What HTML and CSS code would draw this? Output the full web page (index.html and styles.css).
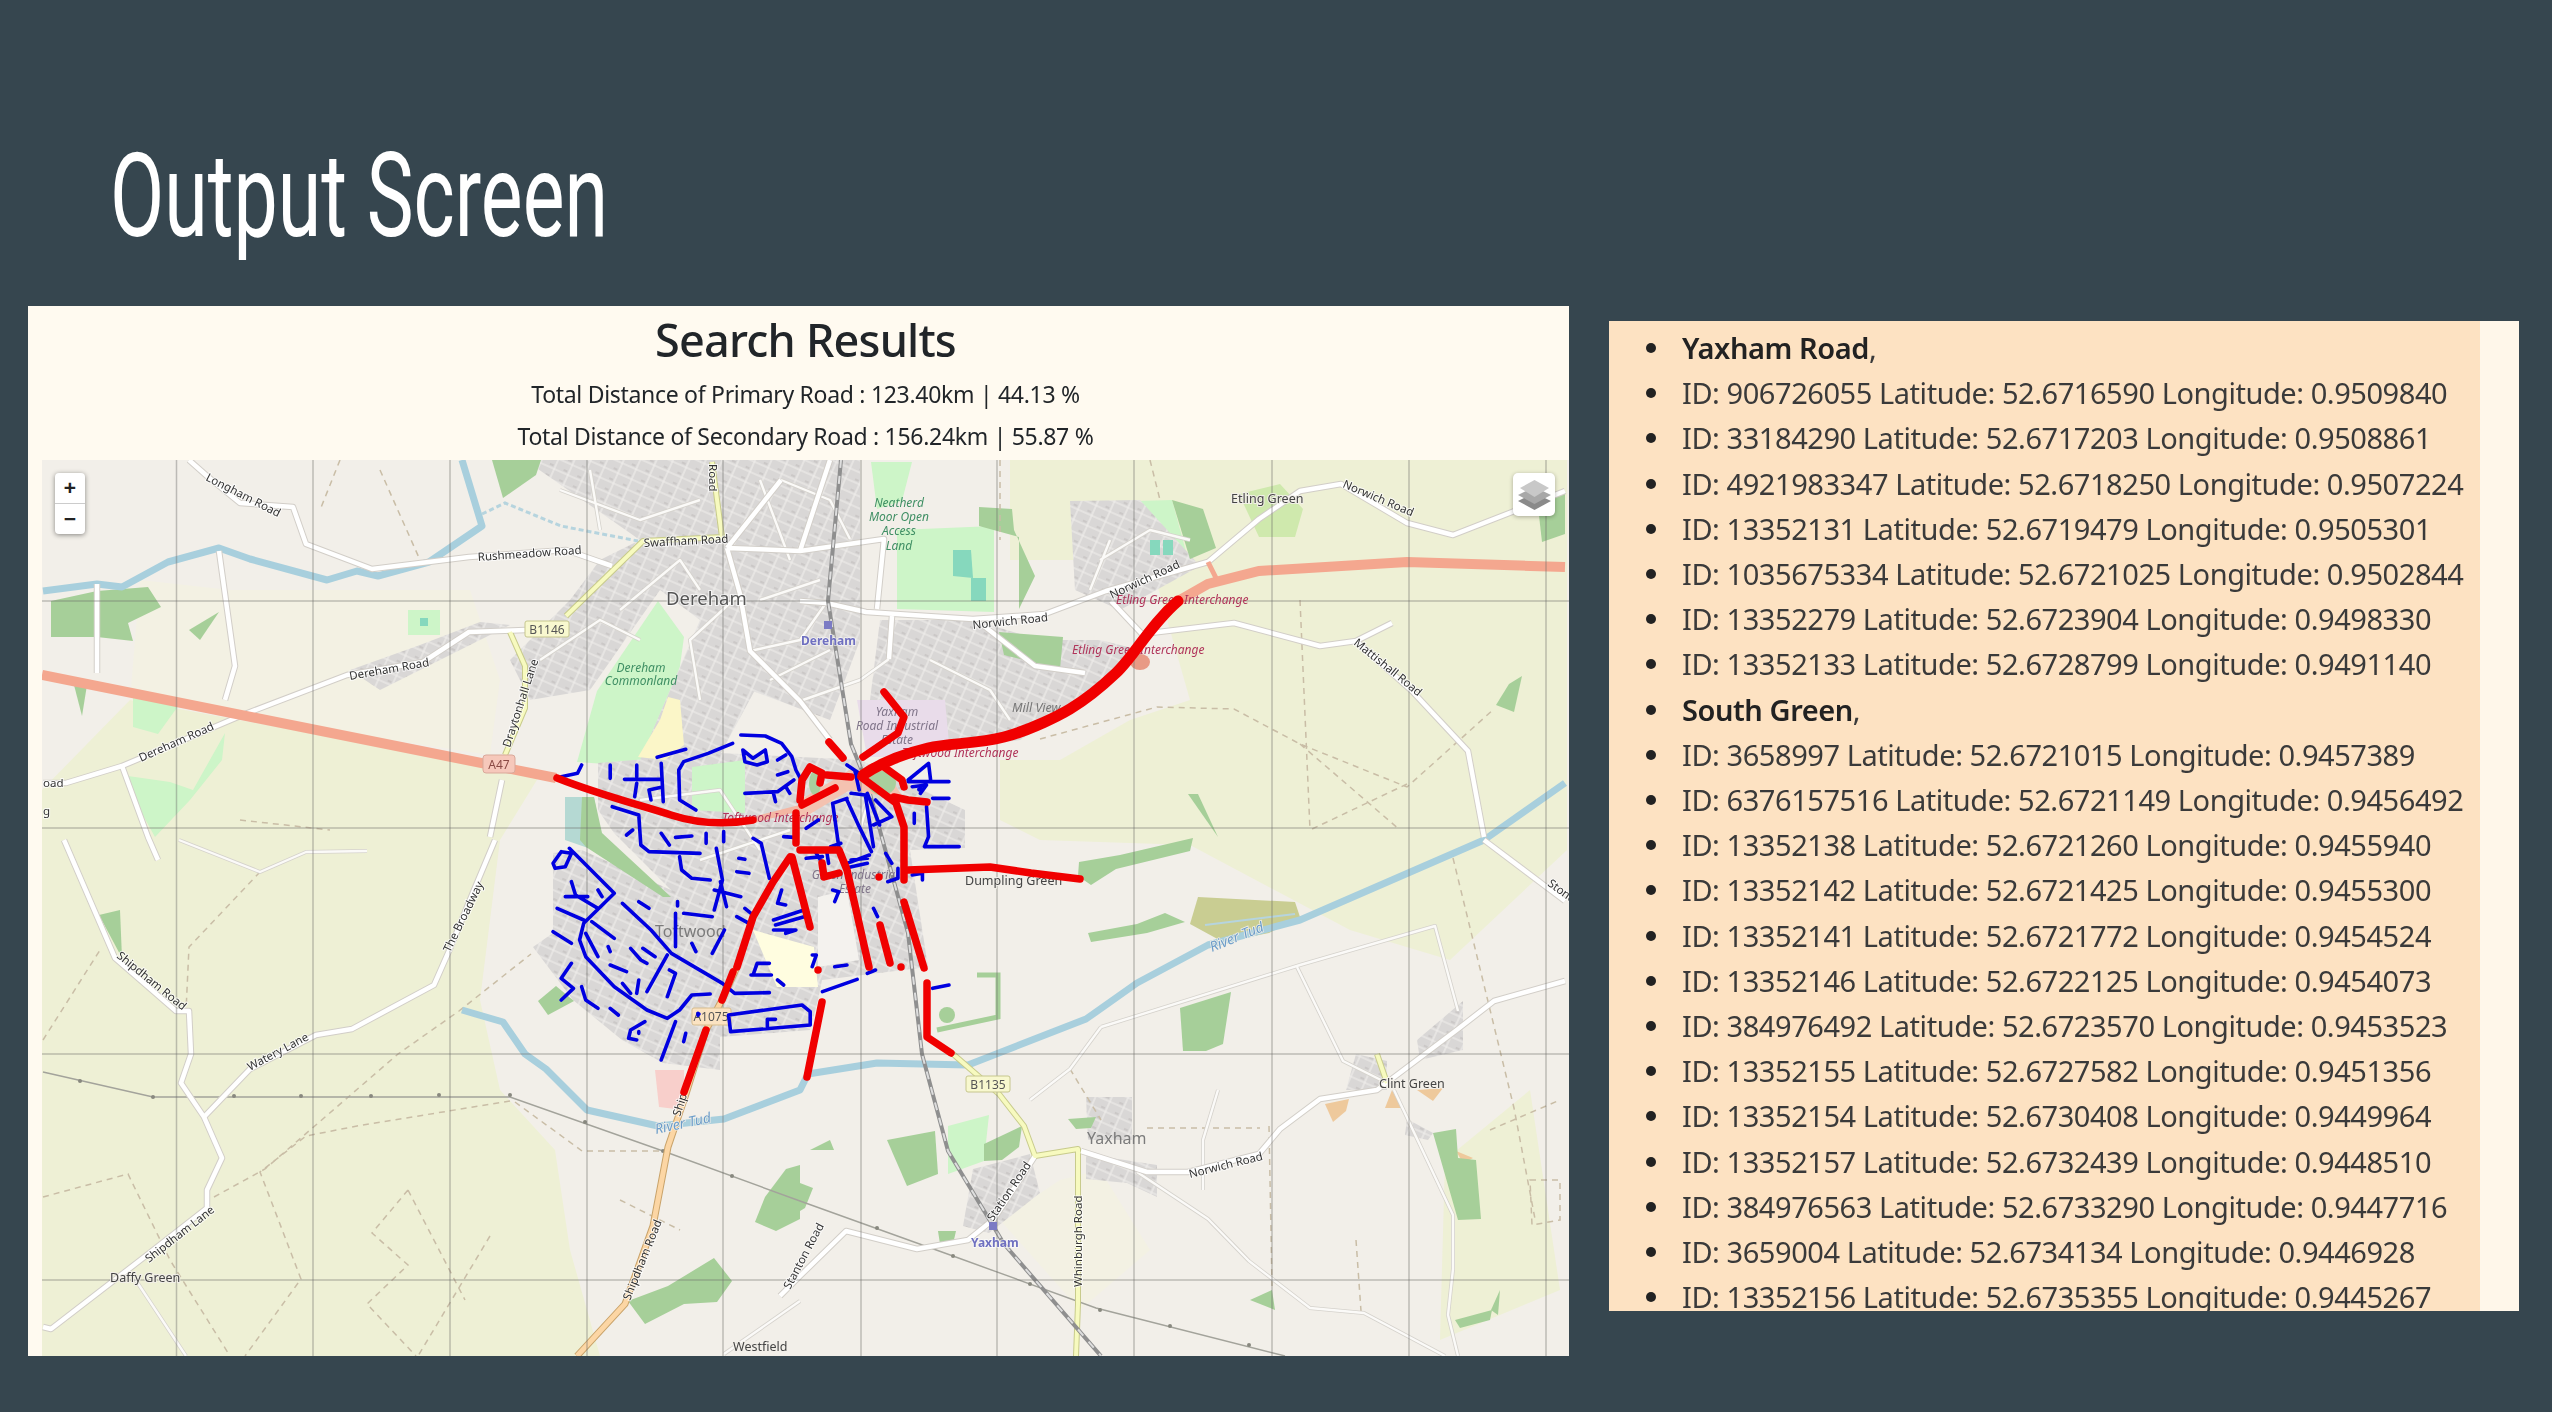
FILE: index.html
```html
<!DOCTYPE html>
<html lang="en">
<head>
<meta charset="utf-8">
<title>Output Screen</title>
<link rel="stylesheet" href="styles.css">
</head>
<body>
<h1 class="title">Output Screen</h1>
<main class="content">
<section class="results">
  <header class="results-head">
    <h2>Search Results</h2>
    <p>Total Distance of Primary Road : 123.40km | 44.13 %</p>
    <p>Total Distance of Secondary Road : 156.24km | 55.87 %</p>
  </header>
  <div class="map">
    <svg class="map-svg" viewBox="42 460 1527 896" width="1527" height="896">
      <defs>
        <pattern id="houses" width="15" height="11" patternUnits="userSpaceOnUse" patternTransform="rotate(24)">
          <rect width="15" height="11" fill="#d9d7d6"/>
          <path d="M0 5H15M7 0V11" stroke="#f1efec" stroke-width="1.100"/>
          <rect x="1" y="1" width="4" height="2" fill="#cbc8c7"/>
        </pattern>
        <g id="roads">
          <path d="M189 460L207 476 240 503 293 507 306 544 372 569 469 557 566 550 612 566"/>
          <path d="M43 783L66 783 122 766 245 714 347 675 423 662 469 632 525 630"/>
          <path d="M97 584V673M219 551L235 666 225 700M122 766L148 837 158 860M490 837L502 780"/>
          <path d="M64 840L115 958 176 1011H189L191 1054 181 1083 204 1117 222 1158 207 1190V1208L143 1258 51 1329 43 1327"/>
          <path d="M204 1117L250 1069 316 1035 352 1029 434 985 449 951 474 890 495 840"/>
          <path d="M1081 1151L1147 1172H1188L1259 1154 1280 1129 1320 1099 1377 1090 1458 1029 1494 1001 1565 981"/>
          <path d="M1035 1156L994 1219 968 1240 917 1249 846 1231 800 1276 780 1296"/>
          <path d="M1484 840L1565 901"/>
          <path d="M727 548L781 480M727 548L800 551 884 539 877 609M727 548L740 594 750 651 800 701 830 740"/>
          <path d="M800 601L826 603 866 612 973 619 1045 614 1106 591 1208 562 1259 519 1300 491 1341 484 1407 523 1453 535 1512 512 1565 491"/>
          <path d="M1111 601L1142 634 1234 623 1320 646 1356 641 1392 623"/>
          <path d="M1356 641L1412 691 1468 751 1484 837"/>
          <path d="M892 616L889 659M984 626L1035 666 1085 673M830 460L800 551"/>
        </g>
        <g id="minor-roads">
          <path d="M135 1279L186 1356M179 840L260 872 306 852 367 851"/>
          <path d="M800 1301L724 1354"/>
          <path d="M1394 1090L1453 1215V1269L1448 1315 1458 1356"/>
          <path d="M1137 1172L1208 1219 1249 1261 1310 1308 1364 1313 1445 1356"/>
          <path d="M1101 1027L1300 965 1435 926 1458 1011"/>
          <path d="M1297 967L1343 1061 1387 1083"/>
          <path d="M1218 1090L1203 1140V1190"/>
          <path d="M1101 1027L1070 1069 1030 1100"/>
          <path d="M781 480L830 500 850 539M750 651L800 640 826 603M800 701L860 680 889 659M740 594L690 640 700 700"/>
          <path d="M620 610L680 560 700 590M540 660L600 620 640 640M560 490L640 520 700 500M590 470L600 530"/>
          <path d="M930 660L990 690 1010 720M1100 560L1150 530 1190 540M1090 590L1110 540"/>
          <path d="M760 480L790 560M760 600L820 580M770 680L830 650"/>
          <path d="M640 800L720 790 760 850M700 860L790 830M860 830L880 760"/>
        </g>
        <g id="yellow-roads">
          <path d="M566 616L643 541 722 537 712 462"/>
          <path d="M510 632L525 666V708L505 755"/>
          <path d="M953 1054L999 1094 1024 1126 1035 1156 1078 1149V1304L1076 1356"/>
          <path d="M1377 1054L1387 1083"/>
        </g>
      </defs>

      <rect class="land-base" x="42" y="460" width="1527" height="896"/>
      <g class="farmland">
        <path d="M42 790L130 700 540 775 500 840 480 1000 500 1090 555 1150 570 1250 600 1356H42Z"/>
        <path d="M130 700L140 580 230 590 470 590 500 680 490 755Z" class="pale"/>
        <path d="M1010 460H1567V850L1450 960 1350 930 1190 845 1040 840 1000 820V760L1060 760 1130 720 1190 700 1150 560 1010 560Z"/>
        <path d="M1060 1180L1100 1170 1150 1250 1080 1310 1000 1220Z" class="pale"/>
        <path d="M1445 1160L1530 1090 1560 1290 1440 1340Z"/>
      </g>
      <g class="lightgreen">
        <path d="M577 762L597 691 658 601 684 637 679 673 663 744 633 766Z"/>
        <path d="M871 462H912L902 501 877 509Z"/>
        <path d="M897 530L994 526V612L897 609Z"/>
        <path d="M1137 501L1172 500 1188 559 1157 562 1137 530Z"/>
        <path d="M951 648H981V687L951 680Z"/>
        <path d="M948 1126L989 1115 984 1161 948 1174Z"/>
        <path d="M128 776L170 782 193 790 225 733 222 760 190 800 155 837 140 810Z"/>
        <path d="M133 698L179 705 158 734 133 727Z"/>
        <path d="M408 610H440V635H408Z"/>
      </g>
      <g class="urban">
        <path d="M525 460H700L735 590 755 690 720 755 640 760 700 620 660 590 590 690 530 700 510 660 570 600 600 560 640 540Z"/>
        <path d="M700 460H860V640L830 720 750 690 735 590Z"/>
        <path d="M1070 501L1140 500 1200 566 1120 610 1075 590Z"/>
        <path d="M880 620L973 620 1040 640 1100 640 1140 650 1100 690 1020 740 940 750 870 700Z"/>
        <path d="M598 763L720 753 860 760 965 810 965 848 910 850 928 967 822 980 818 1000 810 1030 720 1037 720 1070 663 1063 622 1040 573 1000 533 947 553 933 553 853 582 850 671 890 614 833 598 810Z"/>
        <path d="M1086 1097H1132V1140H1088Z"/>
        <path d="M1086 1154L1157 1165V1197L1127 1183 1086 1179Z"/>
        <path d="M973 1169L1030 1154 1040 1193 989 1233 963 1226Z"/>
        <path d="M1356 1054L1387 1061V1090L1346 1090Z"/>
        <path d="M1407 1119L1433 1133 1428 1140 1405 1135Z"/>
        <path d="M1417 1040L1463 1001V1050L1420 1060Z"/>
        <path d="M350 670L420 645 480 622 510 625 450 655 380 690Z"/>
      </g>
      <g class="special">
        <path class="purple" d="M857 700H945L949 743 904 757 867 757Z"/>
        <path class="school" d="M753 930L814 947 818 987 777 987Z"/>
        <path class="retail" d="M818 897L847 890 859 960 818 967Z"/>
        <path class="sand" d="M638 757L660 720 668 697 680 700 684 745 665 760Z"/>
        <path class="pink" d="M655 1070H684V1110L659 1107Z"/>
        <path class="lightgreen-fill" d="M692 767L745 760V813L692 810Z"/>
        <path class="orange" d="M1325 1104L1349 1099 1346 1111 1333 1122Z"/>
        <path class="orange" d="M1392 1090L1402 1108 1385 1108Z"/>
        <path class="orange" d="M1417 1090L1443 1088 1433 1101Z"/>
        <path class="orange" d="M1456 1151L1473 1158 1463 1163Z"/>
        <path class="olive" d="M1198 897L1295 902 1300 917 1269 933 1223 942 1190 924Z"/>
        <path class="reservoir" d="M565 797H594L600 830 588 848 565 840Z"/>
      </g>
      <g class="wood">
        <path d="M51 601L97 591 148 587 161 607 128 623 133 641 97 637 51 637Z"/>
        <path d="M492 460H541L536 475 503 498Z"/>
        <path d="M189 630L219 612 200 640Z"/>
        <path d="M74 685H87L82 716Z"/>
        <path d="M979 507L1012 509 1014 530 1035 576 1019 609V537L979 526Z"/>
        <path d="M1172 500L1203 509 1216 548 1190 559Z"/>
        <path d="M1537 498L1565 494V534L1542 542Z"/>
        <path d="M1509 684L1522 676 1514 712 1496 705Z"/>
        <path d="M1188 794H1198L1218 837Z"/>
        <path d="M999 632L1063 637 1060 669 1004 655Z"/>
        <path d="M1079 862L1120 855 1193 838 1190 851 1116 869 1091 885 1078 876Z"/>
        <path d="M1088 933L1137 924 1165 913 1185 922 1147 933 1091 942Z"/>
        <path d="M1180 1008L1231 992 1223 1044 1206 1051H1183Z"/>
        <path d="M887 1140L935 1131 938 1174 907 1186Z"/>
        <path d="M984 1144L1022 1126 1019 1147 1002 1160 984 1161Z"/>
        <path d="M1068 1119L1096 1117 1091 1128 1076 1129Z"/>
        <path d="M800 1183L813 1188 805 1208 800 1211Z"/>
        <path d="M1433 1133L1456 1129 1458 1158 1476 1160 1481 1219 1458 1220Z"/>
        <path d="M938 1231H956L953 1244 940 1244Z"/>
        <path d="M628 1301L668 1286 714 1258 732 1281 717 1302 684 1304 645 1324Z"/>
        <path d="M755 1222L765 1197 786 1169 800 1165V1219L776 1231Z"/>
        <path d="M99 915L120 910 122 958Z"/>
        <path d="M538 1001L556 986 574 1001 548 1015Z"/>
        <path d="M582 797H594L602 833 671 897H663L586 847 580 840Z"/>
        <path d="M810 1150H834L830 1140Z"/>
        <path d="M1239 494L1280 484 1303 509 1295 537 1259 537Z" class="meadow"/>
        <path d="M1250 1300L1272 1290 1275 1310Z"/>
        <path d="M1455 1320L1492 1310 1490 1320 1460 1328Z"/>
        <path d="M1491 1310L1500 1290 1498 1315Z"/>
      </g>
      <g class="pitches">
        <path d="M953 550H971L973 578 953 576Z"/>
        <path d="M971 578H986V601H971Z"/>
        <path d="M1150 540H1160V555H1150ZM1163 540H1173V555H1163Z"/>
        <path d="M420 618H428V626H420Z"/>
      </g>
      <path class="park-wall" d="M977 975H998V1017L937 1030"/>
      <circle class="park-pond" cx="947" cy="1015" r="8"/>
      <g class="tracks">
        <path d="M260 872L189 947 186 1011M43 1040L100 950M214 1197L265 1169 398 1054 459 1011 531 954"/>
        <path d="M510 1101L357 1126 306 1136 260 1172 301 1279 245 1356M43 1197L128 1174 170 1260 230 1356"/>
        <path d="M408 1190L372 1233 408 1265 367 1304 416 1356M490 1236L418 1356M408 1190L465 1300"/>
        <path d="M515 1102L582 1151H663"/>
        <path d="M1040 739L1157 707 1234 709 1300 744 1407 787 1494 709M1407 784L1310 830M1300 744L1400 830"/>
        <path d="M1453 858L1514 1108 1535 1219M1269 1126L1272 1286M1070 1069L1101 1120M1356 1240L1361 1311"/>
        <path d="M1147 1128H1260M1490 1130L1560 1100M1530 1180H1560V1220L1532 1225Z"/>
        <path d="M340 460L320 510M380 470L420 560M240 820L330 830M620 1200L680 1230"/>
        <path d="M1000 460L1000 540M1150 460L1160 500M1300 600L1310 830"/>
      </g>
      <g class="water">
        <path d="M43 591L97 584 122 587 168 562 219 548 250 559 327 580 357 571 378 576 429 562 482 526 462 460"/>
        <path d="M462 1010L503 1022 525 1054 546 1069 587 1110 658 1126 724 1119 800 1090 808 1074 877 1063 968 1065 1086 1019 1137 983 1208 945 1300 920 1484 840 1565 783"/>
      </g>
      <path class="stream" d="M482 514L505 503 561 526 638 541"/>
      <path class="stream-thin" d="M1205 925L1295 914"/>
      <path class="powerline" d="M43 1072L153 1097H510L663 1151 800 1201 953 1256 1096 1308 1285 1356"/>
      <g class="pylons">
        <circle cx="80" cy="1081" r="2"/><circle cx="153" cy="1097" r="2"/><circle cx="234" cy="1096" r="2"/><circle cx="301" cy="1096" r="2"/><circle cx="371" cy="1096" r="2"/><circle cx="439" cy="1095" r="2"/><circle cx="510" cy="1095" r="2"/><circle cx="585" cy="1122" r="2"/><circle cx="663" cy="1151" r="2"/><circle cx="732" cy="1176" r="2"/><circle cx="877" cy="1228" r="2"/><circle cx="953" cy="1256" r="2"/><circle cx="1030" cy="1284" r="2"/><circle cx="1100" cy="1310" r="2"/><circle cx="1170" cy="1326" r="2"/><circle cx="1249" cy="1345" r="2"/>
      </g>
      <use href="#minor-roads" class="casing-minor"/>
      <use href="#minor-roads" class="road-minor"/>
      <use href="#roads" class="casing"/>
      <use href="#yellow-roads" class="casing-yellow"/>
      <use href="#roads" class="road"/>
      <use href="#yellow-roads" class="road-yellow"/>
      <path class="road-orange-case" d="M737 967L722 1000 706 1030 686 1094 668 1147 653 1226 625 1304 577 1356"/>
      <path class="road-orange" d="M737 967L722 1000 706 1030 686 1094 668 1147 653 1226 625 1304 577 1356"/>
      <path class="rail" d="M841 460L828 601 851 744 867 783 908 933 922 1054 948 1151 1004 1244 1101 1356"/>
      <path class="rail-dash" d="M841 460L828 601 851 744 867 783 908 933 922 1054 948 1151 1004 1244 1101 1356"/>
      <path class="trunk" d="M42 675L556 778"/>
      <path class="trunk-thin" d="M753 820L800 808 836 788"/>
      <path class="trunk" d="M1178 601L1208 584 1259 571 1407 562 1565 567"/>
      <path class="trunk-link" d="M1208 562L1216 578"/>
      <path class="junction" d="M800 800L850 770 885 770 905 800 850 790 800 820Z"/>
      <ellipse class="junction-green" cx="882" cy="783" rx="14" ry="12"/>
      <ellipse class="junction-green" cx="815" cy="783" rx="6" ry="12"/>
      <ellipse class="junction-orange" cx="1140" cy="662" rx="10" ry="8"/>
      <g class="grid">
        <path d="M176.500 460V1356M313 460V1356M450 460V1356M587 460V1356M723 460V1356M861 460V1356M997 460V1356M1134 460V1356M1272 460V1356M1409 460V1356M1546 460V1356"/>
        <path d="M42 601H1569M42 828H1569M42 1054H1569M42 1280H1569"/>
      </g>

      <g class="labels">
        <text x="205" y="480" transform="rotate(27 205 480)">Longham Road</text>
        <text x="478" y="561" transform="rotate(-4 478 561)">Rushmeadow Road</text>
        <text x="644" y="547" transform="rotate(-3 644 547)">Swaffham Road</text>
        <text x="709" y="464" transform="rotate(90 709 464)">Road</text>
        <text x="350" y="680" transform="rotate(-10 350 680)">Dereham Road</text>
        <text x="141" y="762" transform="rotate(-24 141 762)">Dereham Road</text>
        <text x="43" y="787">oad</text>
        <text x="43" y="815">g</text>
        <text x="510" y="748" transform="rotate(-72 510 748)">Draytonhall Lane</text>
        <text x="973" y="629" transform="rotate(-6 973 629)">Norwich Road</text>
        <text x="1112" y="599" transform="rotate(-25 1112 599)">Norwich Road</text>
        <text x="1342" y="487" transform="rotate(23 1342 487)">Norwich Road</text>
        <text x="1353" y="644" transform="rotate(39 1353 644)">Mattishall Road</text>
        <text x="1190" y="1178" transform="rotate(-14 1190 1178)">Norwich Road</text>
        <text x="993" y="1222" transform="rotate(-56 993 1222)">Station Road</text>
        <text x="1082" y="1287" transform="rotate(-90 1082 1287)">Whinburgh Road</text>
        <text x="790" y="1290" transform="rotate(-62 790 1290)">Stanton Road</text>
        <text x="1547" y="885" transform="rotate(36 1547 885)">Stone Road</text>
        <text x="116" y="957" transform="rotate(39 116 957)">Shipdham Road</text>
        <text x="250" y="1071" transform="rotate(-28 250 1071)">Watery Lane</text>
        <text x="450" y="953" transform="rotate(-64 450 953)">The Broadway</text>
        <text x="149" y="1263" transform="rotate(-38 149 1263)">Shipdham Lane</text>
        <text x="630" y="1301" transform="rotate(-68 630 1301)">Shipdham Road</text>
        <text x="680" y="1117" transform="rotate(-72 680 1117)">Ship</text>
      </g>
      <g class="hamlets">
        <text x="110" y="1282">Daffy Green</text>
        <text x="733" y="1351">Westfield</text>
        <text x="1231" y="503">Etling Green</text>
        <text x="1379" y="1088">Clint Green</text>
        <text x="965" y="885">Dumpling Green</text>
      </g>
      <text class="town" x="666" y="605">Dereham</text>
      <text class="village" x="1087" y="1144">Yaxham</text>
      <text class="village" x="655" y="937">Toftwood</text>
      <text class="mill" x="1012" y="712">Mill View</text>
      <g class="parks">
        <text x="641" y="672">Dereham</text>
        <text x="641" y="685">Commonland</text>
        <text x="899" y="507">Neatherd</text>
        <text x="899" y="521">Moor Open</text>
        <text x="899" y="535">Access</text>
        <text x="899" y="550">Land</text>
      </g>
      <g class="estate">
        <text x="897" y="716">Yaxham</text>
        <text x="897" y="730">Road Industrial</text>
        <text x="897" y="744">Estate</text>
        <text x="855" y="879">Green Industrial</text>
        <text x="855" y="893">Estate</text>
      </g>
      <g class="interchange">
        <text x="1116" y="604">Etling Green Interchange</text>
        <text x="1072" y="654">Etling Green Interchange</text>
        <text x="722" y="822">Toftwood Interchange</text>
        <text x="902" y="757">Toftwood Interchange</text>
      </g>
      <g class="rivers">
        <text x="656" y="1134" transform="rotate(-12 656 1134)">River Tud</text>
        <text x="1212" y="952" transform="rotate(-22 1212 952)">River Tud</text>
      </g>
      <rect class="station-mark" x="824" y="621" width="8" height="8"/>
      <rect class="station-mark" x="989" y="1222" width="8" height="8"/>
      <text class="station" x="801" y="645">Dereham</text>
      <text class="station" x="971" y="1247">Yaxham</text>
      <rect class="shield shield-b" x="525" y="621" width="44" height="16" rx="2"/>
      <text class="shield-text" x="547" y="634">B1146</text>
      <rect class="shield shield-a" x="483" y="755" width="32" height="18" rx="3"/>
      <text class="shield-text shield-text-a" x="499" y="769">A47</text>
      <rect class="shield shield-b" x="966" y="1076" width="44" height="16" rx="2"/>
      <text class="shield-text" x="988" y="1089">B1135</text>
      <rect class="shield shield-c" x="692" y="1008" width="39" height="17" rx="2"/>
      <text class="shield-text" x="711" y="1021">A1075</text>

      <g transform="translate(500 700) scale(.40816 .33333)">
        <path class="secondary" d="M590 105L650 108 690 130 715 170 725 210 740 245M570 130L510 160 450 185 438 210 440 300 480 330M385 172L455 148M595 150L620 175 650 150 655 185 630 195 600 185ZM680 180L700 165M680 225L705 215M600 280L680 275 720 240M670 280L675 305M700 260L710 280M150 230L190 220 200 195M270 195V235M335 195V230M305 238H395M395 190L400 305M335 250L330 290M365 270L370 300M395 262L365 270M275 320L340 345 345 435 365 455 490 460M310 405L325 390M395 400L415 435M430 412L470 408M505 400V430M548 395V425M620 415L640 430 660 535M530 445L545 540 525 630M440 470L445 510 470 535 515 540M170 445L280 580 205 670 195 720 210 770 280 860 360 930 410 955 440 930 470 885 515 882M150 455L175 460 160 500 135 505 130 490ZM300 610L370 690 420 760 545 850 575 880 660 878M410 765L360 875M175 545L185 585 240 625M160 590H215M140 625L205 660M240 570L250 590M225 665L280 715M210 700L240 770M265 740L270 755M130 695L175 730M175 790L150 835 180 865 150 900M200 860L210 900 240 925M320 745L345 780 360 790M350 745L380 770M270 795L310 815M300 850L320 880M340 840L335 880M415 810L430 820 410 890M270 925L290 945M355 965L320 990 315 1015 335 1020M430 965L395 1080M455 1000L450 1025M340 605L365 625M435 605V618M450 640L520 650M430 640V740M470 730L480 755M550 690L520 760M525 570L590 590M540 545L555 620M580 650L610 670M580 515L610 520M585 475L600 478M600 625L615 640M690 570L680 610 700 615M670 660L745 630M675 675L745 650M670 690L725 690 700 700M750 385L780 360M695 410L720 412M620 825L630 790H660M615 825H665M680 840L695 855M765 765H775L765 800M820 800L850 795M790 875L875 838M900 820L920 810M560 945L740 915 760 935V975L565 995ZM655 980V958H675M815 310L830 440M850 300L880 380 910 455M860 280L895 285 915 440M900 280L930 375M920 300L960 350 915 375M815 310L850 295M870 215L880 270M850 195L880 220M750 475L790 470M770 450L790 490M800 450L805 490M810 440L835 430M850 490L905 465M860 480L900 475M845 505L900 490M815 570L830 575 820 605M945 460L960 490M950 545L975 535V505M1010 525L1035 520V540M915 625L925 650M1000 240L1050 190 1055 240M1010 260L1045 255 1030 280M1000 245H1100M1060 295H1100M1015 340V370M1045 320L1050 410 1040 440H1125M1060 865L1100 855M1005 680V684M485 940V946M340 995V1000"/>
        <circle class="secondary-dot" cx="1030" cy="268" r="8"/>
        <circle class="secondary-dot" cx="487" cy="942" r="5"/>
      </g>
      <g class="primary">
        <path class="primary-wide" d="M1178 601C1150 625 1135 655 1116 673S1080 703 1070 709 1031 730 1004 737 949 743 928 748 882 762 863 775"/>
        <path d="M557 778C600 795 640 805 671 815S730 824 753 820"/>
        <path d="M802 805L835 788"/>
        <path d="M800 800L802 780 810 767 822 773 820 783"/>
        <path d="M827 775L851 777"/>
        <path d="M829 742L843 758"/>
        <path d="M884 692L904 717 898 733 863 757"/>
        <path d="M861 777L896 803 904 827V880"/>
        <path d="M884 767L902 780 904 787"/>
        <path d="M894 797L908 800 927 802"/>
        <path d="M908 870L990 867 1031 873 1080 879"/>
        <path d="M796 813V843"/>
        <path d="M790 857L773 882 753 917 737 967"/>
        <path d="M733 972L722 1000"/>
        <path d="M706 1030L684 1092"/>
        <path d="M792 857L810 927"/>
        <path d="M800 850H839L847 870 869 967"/>
        <path d="M880 925L890 963"/>
        <path d="M822 863L824 877 839 873"/>
        <path d="M904 902L924 968"/>
        <path d="M927 983V1037L951 1053"/>
        <path d="M822 1002L807 1077"/>
        <path d="M818 970V970.100M901 967V967.100M879 877V877.100"/>
      </g>
    </svg>
    <div class="zoom-control">
      <span class="zoom-btn">+</span>
      <span class="zoom-btn">−</span>
    </div>
    <div class="layers-control">
      <svg viewBox="0 0 33 30" width="33" height="30">
        <path class="layer-c" d="M16.500 13L33 21 16.500 30 0 21Z"/>
        <path class="layer-b" d="M16.500 7L33 15 16.500 24 0 15Z"/>
        <path class="layer-a" d="M16.500 0L31 8 16.500 17 2 8Z"/>
      </svg>
    </div>
  </div>
</section>
<section class="nodes">
  <ul class="node-list">
    <li><b>Yaxham Road</b>,</li>
    <li>ID: 906726055 Latitude: 52.6716590 Longitude: 0.9509840</li>
    <li>ID: 33184290 Latitude: 52.6717203 Longitude: 0.9508861</li>
    <li>ID: 4921983347 Latitude: 52.6718250 Longitude: 0.9507224</li>
    <li>ID: 13352131 Latitude: 52.6719479 Longitude: 0.9505301</li>
    <li>ID: 1035675334 Latitude: 52.6721025 Longitude: 0.9502844</li>
    <li>ID: 13352279 Latitude: 52.6723904 Longitude: 0.9498330</li>
    <li>ID: 13352133 Latitude: 52.6728799 Longitude: 0.9491140</li>
    <li><b>South Green</b>,</li>
    <li>ID: 3658997 Latitude: 52.6721015 Longitude: 0.9457389</li>
    <li>ID: 6376157516 Latitude: 52.6721149 Longitude: 0.9456492</li>
    <li>ID: 13352138 Latitude: 52.6721260 Longitude: 0.9455940</li>
    <li>ID: 13352142 Latitude: 52.6721425 Longitude: 0.9455300</li>
    <li>ID: 13352141 Latitude: 52.6721772 Longitude: 0.9454524</li>
    <li>ID: 13352146 Latitude: 52.6722125 Longitude: 0.9454073</li>
    <li>ID: 384976492 Latitude: 52.6723570 Longitude: 0.9453523</li>
    <li>ID: 13352155 Latitude: 52.6727582 Longitude: 0.9451356</li>
    <li>ID: 13352154 Latitude: 52.6730408 Longitude: 0.9449964</li>
    <li>ID: 13352157 Latitude: 52.6732439 Longitude: 0.9448510</li>
    <li>ID: 384976563 Latitude: 52.6733290 Longitude: 0.9447716</li>
    <li>ID: 3659004 Latitude: 52.6734134 Longitude: 0.9446928</li>
    <li>ID: 13352156 Latitude: 52.6735355 Longitude: 0.9445267</li>
  </ul>
</section>
</main>
</body>
</html>
```

FILE: styles.css
```css
html, body { margin: 0; padding: 0; }
body {
  width: 2552px;
  height: 1412px;
  overflow: hidden;
  background: #36464f;
  font-family: "Noto Sans", "Open Sans", sans-serif;
}
.title {
  margin: 0;
  height: 306px;
  padding: 126px 0 0 110px;
  box-sizing: border-box;
  color: #fff;
  font-family: Roboto, sans-serif;
  font-weight: 400;
  font-size: 116px;
  line-height: 140px;
  transform: scaleX(.68);
  transform-origin: 110px 0;
  white-space: nowrap;
}
.content { display: flex; align-items: flex-start; padding-left: 28px; }

.results {
  width: 1541px;
  height: 1050px;
  box-sizing: border-box;
  padding-left: 14px;
  display: flex;
  flex-direction: column;
  background: #fffaf0;
  flex: none;
}
.results-head {
  height: 154px;
  box-sizing: border-box;
  text-align: center;
  color: #212529;
  filter: blur(.5px);
}
.results-head h2 {
  margin: 0;
  padding-top: 6px;
  font-size: 45px;
  font-weight: 500;
  line-height: 56px;
  letter-spacing: -.8px;
}
.results-head p {
  margin: 0;
  font-size: 23px;
  line-height: 42px;
  letter-spacing: -.3px;
}
.results-head h2 + p { margin-top: 5px; }

.map { position: relative; height: 896px; overflow: hidden; }
.map-svg { display: block; filter: blur(.6px); }
.land-base { fill: #f2efe9; }
.farmland path { fill: #eef0d5; }
.farmland .pale { fill: #f3f1e3; }
.lightgreen path { fill: #cdf5c8; }
.urban path { fill: url(#houses); }
.purple { fill: #e9dcea; }
.school { fill: #fffde0; }
.retail { fill: #f4f2ee; }
.sand { fill: #fbf6c8; }
.pink { fill: #f8cfcb; }
.lightgreen-fill { fill: #cdf5c8; }
.orange { fill: #eec99c; }
.olive { fill: #c9cd92; }
.reservoir { fill: #b5d9d3; }
.wood path { fill: #a6cf99; }
.wood .meadow { fill: #cfe9ad; }
.pitches path { fill: #86d8bd; }
.park-wall { fill: none; stroke: #a6cf99; stroke-width: 5; }
.park-pond { fill: #a6cf99; }
.tracks path { fill: none; stroke: #c9bda6; stroke-width: 1.5; stroke-dasharray: 6 5; }
.water path { fill: none; stroke: #a8cfdd; stroke-width: 7; stroke-linejoin: round; }
.stream { fill: none; stroke: #b6d4de; stroke-width: 3; stroke-dasharray: 5 3; }
.stream-thin { fill: none; stroke: #b6d4de; stroke-width: 2; }
.powerline { fill: none; stroke: #a3a39b; stroke-width: 1.4; }
.pylons circle { fill: #88887f; }
.casing { fill: none; stroke: #d2cec8; stroke-width: 6.500; stroke-linejoin: round; }
.road { fill: none; stroke: #fff; stroke-width: 4.500; stroke-linejoin: round; }
.casing-minor { fill: none; stroke: #d5d2cc; stroke-width: 4; stroke-linejoin: round; }
.road-minor { fill: none; stroke: #fbfaf8; stroke-width: 2.400; stroke-linejoin: round; }
.casing-yellow { fill: none; stroke: #c8cb8c; stroke-width: 6; stroke-linejoin: round; }
.road-yellow { fill: none; stroke: #f7fabf; stroke-width: 4; stroke-linejoin: round; }
.road-orange-case { fill: none; stroke: #c9a36a; stroke-width: 7; }
.road-orange { fill: none; stroke: #fcd6a4; stroke-width: 5; }
.rail { fill: none; stroke: #8f8f8f; stroke-width: 4; stroke-linejoin: round; }
.rail-dash { fill: none; stroke: #fff; stroke-width: 2; stroke-dasharray: 8 8; opacity: .7; }
.trunk { fill: none; stroke: #f4a78f; stroke-width: 10; }
.trunk-thin { fill: none; stroke: #f4b6a3; stroke-width: 6; }
.trunk-link { fill: none; stroke: #f4a78f; stroke-width: 5; }
.junction { fill: #f4c2b0; }
.junction-green { fill: #a9cf9d; }
.junction-orange { fill: #e89a85; }
.grid path { fill: none; stroke: #6c6c68; stroke-opacity: .4; stroke-width: 1.5; }

.labels text {
  font: 11.500px "Noto Sans", sans-serif;
  fill: #333;
  stroke: #fff;
  stroke-width: 2px;
  paint-order: stroke;
  stroke-opacity: .75;
}
.hamlets text { font: 12.500px "Noto Sans", sans-serif; fill: #444; stroke: #f2efe9; stroke-width: 2px; paint-order: stroke; }
.town { font: 18.500px "Noto Sans", sans-serif; fill: #555; stroke: #fff; stroke-width: 2px; paint-order: stroke; stroke-opacity: .7; }
.village { font: 16px "Noto Sans", sans-serif; fill: #7b7b7b; }
.mill { font: italic 12.500px "Noto Sans", sans-serif; fill: #777; }
.parks text { font: italic 12px "Noto Sans", sans-serif; fill: #3f8f64; text-anchor: middle; }
.estate text { font: italic 12px "Noto Sans", sans-serif; fill: #80758a; text-anchor: middle; }
.interchange text { font: italic 12px "Noto Sans", sans-serif; fill: #b0345a; }
.rivers text { font: italic 14px "Noto Sans", sans-serif; fill: #6a9cc9; stroke: #f2efe9; stroke-width: 1.5px; paint-order: stroke; }
.station-mark { fill: #7b7bc4; }
.station { font: bold 12px "Noto Sans", sans-serif; fill: #6f70c0; stroke: #fff; stroke-width: 1.5px; paint-order: stroke; stroke-opacity: .7; }
.shield { stroke-width: 1; }
.shield-b { fill: #f8f8cf; stroke: #c6c68e; }
.shield-a { fill: #f6c8bb; stroke: #d9a99a; }
.shield-c { fill: #fbe3c2; stroke: #d7bd8e; }
.shield-text { font: 12px "Noto Sans", sans-serif; fill: #555; text-anchor: middle; }
.shield-text-a { fill: #8a4a44; }

.secondary {
  fill: none;
  stroke: #0000e0;
  stroke-width: 3.600;
  stroke-linecap: round;
  stroke-linejoin: round;
  vector-effect: non-scaling-stroke;
}
.secondary-dot { fill: #0000e0; }
.primary path {
  fill: none;
  stroke: #f00000;
  stroke-width: 7.500;
  stroke-linecap: round;
  stroke-linejoin: round;
}
.primary .primary-wide { stroke-width: 11; }

.zoom-control {
  position: absolute;
  left: 13px;
  top: 13px;
  width: 30px;
  height: 61px;
  display: flex;
  flex-direction: column;
  border-radius: 4px;
  background: #fff;
  box-shadow: 0 1px 5px rgba(0, 0, 0, .45);
  overflow: hidden;
}
.zoom-btn {
  flex: 1;
  display: flex;
  align-items: center;
  justify-content: center;
  font: bold 21px "Liberation Sans", sans-serif;
  color: #222;
}
.zoom-btn + .zoom-btn { border-top: 1px solid #ccc; }
.layers-control {
  position: absolute;
  right: 14px;
  top: 13px;
  width: 42px;
  height: 43px;
  display: flex;
  align-items: center;
  justify-content: center;
  background: #fff;
  border-radius: 5px;
  box-shadow: 0 1px 4px rgba(0, 0, 0, .3);
}
.layer-a { fill: #c8c8c8; }
.layer-b { fill: #a8a8a8; }
.layer-c { fill: #8a8a8a; }

.nodes {
  margin: 15px 0 0 40px;
  width: 910px;
  height: 990px;
  box-sizing: border-box;
  padding-right: 39px;
  background: #fff7ea;
  overflow: hidden;
  flex: none;
}
.node-list {
  list-style: none;
  margin: 0;
  padding: 4px 0 0 73px;
  height: 100%;
  box-sizing: border-box;
  background: #fde2c2;
  color: #3a3a3a;
  font-size: 29px;
  line-height: 45.200px;
  letter-spacing: -.44px;
  overflow: hidden;
  filter: blur(.5px);
}
.node-list li { white-space: nowrap; position: relative; }
.node-list li::before {
  content: "";
  position: absolute;
  left: -36px;
  top: 18px;
  width: 10px;
  height: 10px;
  border-radius: 50%;
  background: #222;
}
.node-list b { font-weight: 600; color: #222; }
```
